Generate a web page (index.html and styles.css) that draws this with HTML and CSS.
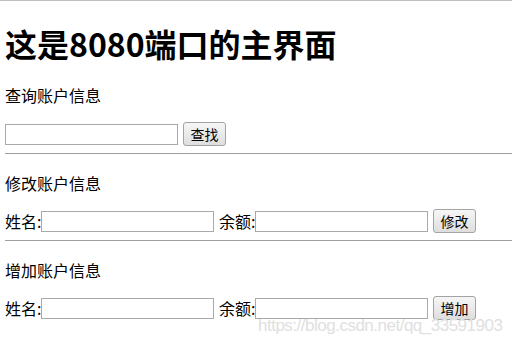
FILE: index.html
```html
<!DOCTYPE html>
<html lang="zh-CN">
<head>
<meta charset="UTF-8">
<meta name="viewport" content="width=device-width, initial-scale=1.0">
<title>8080主界面</title>
<link rel="stylesheet" href="styles.css">
</head>
<body>
<h1 class="title">这是8080端口的主界面</h1>

<p class="section-title">查询账户信息</p>
<div class="form-row first-row">
    <input type="text" class="txt">
    <button class="btn">查找</button>
</div>
<hr class="line">

<p class="section-title">修改账户信息</p>
<div class="form-row">
    <label class="lbl">姓名:</label>
    <input type="text" class="txt">
    <label class="lbl lbl-gap">余额:</label>
    <input type="text" class="txt">
    <button class="btn">修改</button>
</div>
<hr class="line">

<p class="section-title">增加账户信息</p>
<div class="form-row">
    <label class="lbl">姓名:</label>
    <input type="text" class="txt">
    <label class="lbl lbl-gap">余额:</label>
    <input type="text" class="txt">
    <button class="btn">增加</button>
</div>

<div class="watermark">https://blog.csdn.net/qq_33591903</div>
</body>
</html>
```

FILE: styles.css
```css
    body, html {
        margin: 0;
        padding: 0;
    }
    body {
        position: relative;
        height: 341px;
        border-top: 1px solid #bdbdbd;
        padding-left: 5px;
        font-family: "Noto Sans CJK SC", "Liberation Sans", sans-serif;
        color: #000000;
        overflow: hidden;
    }
    .title {
        font-size: 32px;
        line-height: 37px;
        font-weight: bold;
        margin: 24px 0 0 0;
    }
    .section-title {
        font-size: 16px;
        line-height: 20px;
        margin: 19px 0 0 0;
    }
    .title + .section-title {
        margin-top: 23px;
    }
    .form-row {
        display: flex;
        align-items: center;
        height: 24px;
        margin-top: 16px;
    }
    .first-row {
        margin-top: 17px;
    }
    .lbl {
        font-size: 16px;
        line-height: 20px;
        width: 36px;
        white-space: nowrap;
    }
    .lbl-gap {
        margin-left: 5px;
    }
    .txt {
        box-sizing: border-box;
        width: 173px;
        height: 21px;
        margin: 0;
        padding: 1px 2px;
        border: 1px solid #a9a9a9;
        background: #ffffff;
        font-size: 13px;
    }
    .btn {
        box-sizing: border-box;
        width: 43px;
        height: 24px;
        margin: 0 0 0 5px;
        padding: 0;
        border: 1px solid #a3a3a3;
        border-radius: 3px;
        background: linear-gradient(#f6f6f6, #dedede);
        font-family: "Noto Sans CJK SC", sans-serif;
        font-size: 14px;
        line-height: 20px;
        color: #000000;
    }
    .line {
        border: 0;
        border-top: 1px solid #a0a0a0;
        height: 0;
        margin: 7px 0 0 0;
    }
    .watermark {
        position: absolute;
        left: 258px;
        top: 315px;
        font-family: "Liberation Sans", Arial, sans-serif;
        font-size: 17px;
        letter-spacing: -0.5px;
        color: #e0e0e0;
        white-space: nowrap;
    }
```
